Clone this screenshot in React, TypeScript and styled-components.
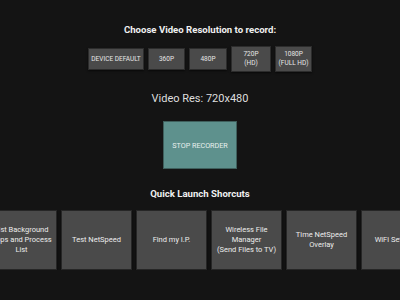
import React from "react";
import styled, { createGlobalStyle } from "styled-components";

const GlobalStyle = createGlobalStyle`
  html, body {
    margin: 0;
    padding: 0;
    background: #141414;
    font-family: Roboto, "Liberation Sans", sans-serif;
  }
`;

const Screen = styled.div`
  width: 400px;
  height: 300px;
  overflow: hidden;
  background: #141414;
  color: #ececec;
  display: flex;
  flex-direction: column;
  align-items: center;
`;

const Heading = styled.div<{ $top: number }>`
  margin-top: ${(p) => p.$top}px;
  font-size: 9.6px;
  font-weight: 700;
  line-height: 14px;
  color: #f0f0f0;
`;

const ResRow = styled.div`
  margin-top: 9px;
  display: flex;
  align-items: center;
  gap: 4px;
`;

const ResButton = styled.div<{ $w: number }>`
  width: ${(p) => p.$w}px;
  min-height: 22px;
  padding: 3px 0;
  box-sizing: border-box;
  display: flex;
  align-items: center;
  justify-content: center;
  text-align: center;
  white-space: pre-line;
  background: #4a4a4a;
  border: 1px solid #2c2c2c;
  box-shadow: 0 1px 2px rgba(0, 0, 0, 0.6);
  font-size: 6.5px;
  line-height: 9px;
  color: #e6e6e6;
  text-transform: uppercase;
`;

const ResLabel = styled.div`
  margin-top: 19px;
  font-size: 11px;
  line-height: 16px;
  color: #dedede;
`;

const StopButton = styled.div`
  margin-top: 14px;
  width: 74px;
  height: 48px;
  display: flex;
  align-items: center;
  justify-content: center;
  background: #5e918d;
  border: 1px solid #3f5f5c;
  box-sizing: border-box;
  font-size: 7.2px;
  color: #e8f0ee;
  text-transform: uppercase;
`;

const TileViewport = styled.div`
  margin-top: 9px;
  width: 400px;
  overflow: hidden;
`;

const TileRow = styled.div`
  display: flex;
  gap: 4px;
  margin-left: -14px;
`;

const Tile = styled.div`
  flex: 0 0 71px;
  height: 60px;
  box-sizing: border-box;
  display: flex;
  align-items: center;
  justify-content: center;
  text-align: center;
  padding: 0 2px;
  background: #4a4a4a;
  border: 1px solid #262626;
  box-shadow: 0 1px 2px rgba(0, 0, 0, 0.7);
  font-size: 7.5px;
  line-height: 10px;
  color: #ececec;
  white-space: pre-line;
`;

const resolutions = [
  { label: "Device Default", w: 56 },
  { label: "360P", w: 37 },
  { label: "480P", w: 38 },
  { label: "720P\n(HD)", w: 40 },
  { label: "1080P\n(Full HD)", w: 37 },
];

const shortcuts = [
  "List Background\nApps and Process\nList",
  "Test NetSpeed",
  "Find my I.P.",
  "Wireless File\nManager\n(Send Files to TV)",
  "Time NetSpeed\nOverlay",
  "WiFi Settings",
];

export default function App() {
  return (
    <Screen>
      <GlobalStyle />
      <Heading $top={23}>Choose Video Resolution to record:</Heading>

      <ResRow>
        {resolutions.map((r) => (
          <ResButton key={r.label} $w={r.w}>
            {r.label}
          </ResButton>
        ))}
      </ResRow>

      <ResLabel>Video Res: 720x480</ResLabel>

      <StopButton>Stop Recorder</StopButton>

      <Heading $top={18}>Quick Launch Shorcuts</Heading>

      <TileViewport>
        <TileRow>
          {shortcuts.map((s) => (
            <Tile key={s}>{s}</Tile>
          ))}
        </TileRow>
      </TileViewport>
    </Screen>
  );
}
